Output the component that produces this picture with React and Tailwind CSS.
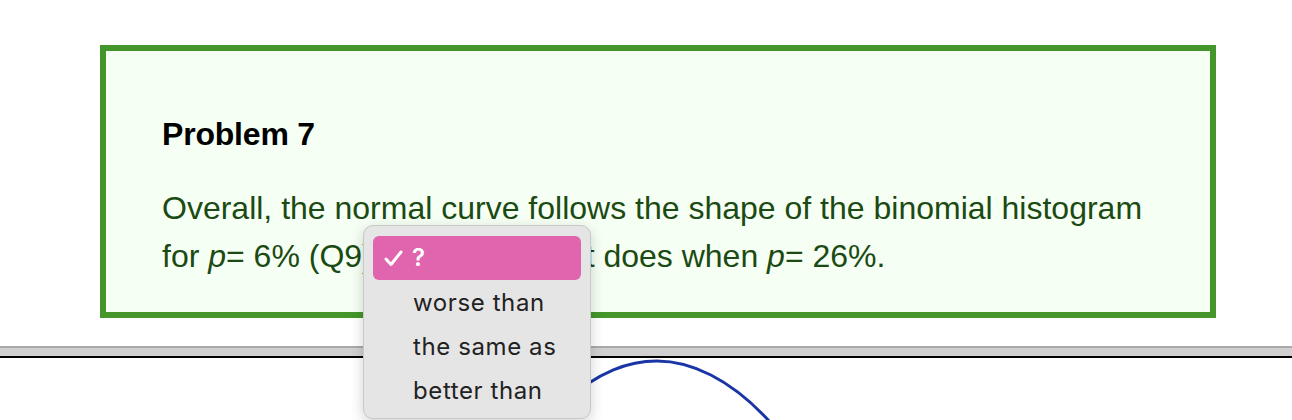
import React from 'react';

const menuItems = ['worse than', 'the same as', 'better than'];

const App = () => {
  return (
    <div className="relative w-[1292px] h-[420px] overflow-hidden bg-white">
      {/* Problem box */}
      <div className="ml-[100px] mt-[45px] w-[1116px] h-[273px] border-[6px] border-[#44962b] bg-[#f6fff4] pl-[56px] pt-[63px] font-['Liberation_Sans',Arial,sans-serif]">
        <h3 className="text-[32px] leading-[40px] font-bold text-black tracking-[-0.2px]">Problem 7</h3>
        <p className="mt-[30px] text-[32px] leading-[48px] text-[#1b4a12] w-[1040px]">
          Overall, the normal curve follows the shape of the binomial histogram
          <br />
          for <i>p</i>= 6% (Q9) <span className="inline-block w-[188px] h-[30px] align-middle" /> it does when <i>p</i>= 26%.
        </p>
      </div>

      {/* Divider bar */}
      <div className="mt-[28px] h-[2px] bg-[#a9a9a9]" />
      <div className="h-[8px] bg-[#d0d0d0]" />
      <div className="h-[2px] bg-black" />

      {/* Normal curve */}
      <svg className="absolute left-0 top-[358px]" width="1292" height="62" viewBox="0 358 1292 62">
        <path d="M560 405 C 600 370, 630 361, 657 361 C 690 361, 730 378, 770 422" fill="none" stroke="#1a35a5" strokeWidth="3" />
      </svg>

      {/* Select dropdown menu */}
      <div className="absolute left-[363px] top-[225px] w-[228px] h-[194px] rounded-[10px] border border-[#c8c8c8] bg-[#e5e5e5] shadow-[0_4px_14px_rgba(0,0,0,0.18)] px-[9px] pt-[10px] font-['Inter','Open_Sans',sans-serif] text-[24px] text-[#222]">
        <div className="flex items-center h-[44px] rounded-[6px] bg-[#e065ae] text-white pl-[11px]">
          <svg width="19" height="17" viewBox="0 0 19 17" className="mr-[9px]">
            <path d="M2 9 L7 14.5 L17 2" fill="none" stroke="white" strokeWidth="3" strokeLinecap="round" strokeLinejoin="round" />
          </svg>
          <span className="font-semibold">?</span>
        </div>
        <div className="pt-[1px]">
          {menuItems.map((item) => (
            <div key={item} className="flex items-center h-[44px] pl-[40px] tracking-[0.6px]">
              {item}
            </div>
          ))}
        </div>
      </div>
    </div>
  );
};

export default App;
